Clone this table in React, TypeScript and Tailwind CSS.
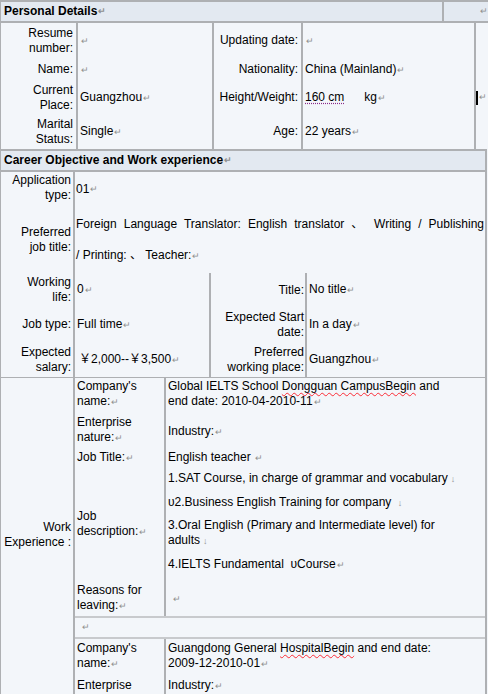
import React from "react";

const PM = () => <span className="ml-px text-[9px] text-[#8f8f8f]">↵</span>;
const LB = () => <span className="ml-[3px] text-[9px] text-[#8f8f8f]">↓</span>;

const line = "border-[#aeb0b3]";

function Header({ title, split }: { title: string; split?: boolean }) {
  return (
    <div className={`flex h-[23px] border-y-2 ${line} bg-[#e3e9f1]`}>
      <div className={`flex items-center pl-[3px] font-bold ${split ? `w-[443px] border-r-2 ${line}` : "flex-1"}`}>
        {title}
        <PM />
      </div>
      {split && (
        <div className="flex flex-1 items-center justify-end">
          <PM />
        </div>
      )}
    </div>
  );
}

function Label({ children, w, pr = "pr-[3px]" }: { children: React.ReactNode; w: string; pr?: string }) {
  return (
    <div className={`flex ${w} shrink-0 items-center justify-end border-r-2 ${line} text-right ${pr}`}>
      <div>{children}</div>
    </div>
  );
}

function Value({ children, w, last }: { children: React.ReactNode; w?: string; last?: boolean }) {
  return (
    <div className={`flex ${w ?? "flex-1"} items-center pl-[2px] ${last ? "" : `shrink-0 border-r-2 ${line}`}`}>
      <div>{children}</div>
    </div>
  );
}

function WorkRow({
  label,
  children,
  h,
  lpt,
  vpt,
}: {
  label: React.ReactNode;
  children: React.ReactNode;
  h: string;
  lpt: string;
  vpt: string;
}) {
  return (
    <div className={`flex shrink-0 ${h}`}>
      <div className={`w-[91px] shrink-0 border-r-2 ${line} pl-[2px] ${lpt}`}>{label}</div>
      <div className={`flex-1 pl-[2px] ${vpt}`}>{children}</div>
    </div>
  );
}

export default function App() {
  return (
    <div className="h-[694px] w-[488px] overflow-hidden bg-[#f3f6fa] font-['Liberation_Sans','Noto_Sans_CJK_SC',Arial,sans-serif] text-[12px] leading-[15px] text-black">
      <div className={`border-l ${line}`}>
        <Header title="Personal Details" split />

        {/* personal details */}
        <div className="flex h-[35px]">
          <Label w="w-[77px]">Resume<br />number:</Label>
          <Value w="w-[136px]"><PM /></Value>
          <Label w="w-[89px]">Updating date:</Label>
          <Value w="w-[173px]"><PM /></Value>
          <div className="flex-1" />
        </div>
        <div className="flex h-[23px]">
          <Label w="w-[77px]">Name:</Label>
          <Value w="w-[136px]"><PM /></Value>
          <Label w="w-[89px]">Nationality:</Label>
          <Value w="w-[173px]">China (Mainland)<PM /></Value>
          <div className="flex-1" />
        </div>
        <div className="flex h-[33px]">
          <Label w="w-[77px]">Current<br />Place:</Label>
          <Value w="w-[136px]">Guangzhou<PM /></Value>
          <Label w="w-[89px]">Height/Weight:</Label>
          <Value w="w-[173px]">
            <span className="whitespace-pre">
              <span className="underline decoration-[#8a2a8a] decoration-dotted underline-offset-2">160 cm</span>
              {"      kg"}
            </span>
            <PM />
          </Value>
          <div className="flex flex-1 items-center">
            <span className="h-[14px] w-[2px] bg-black" />
            <PM />
          </div>
        </div>
        <div className="flex h-[35px]">
          <Label w="w-[77px]">Marital<br />Status:</Label>
          <Value w="w-[136px]">Single<PM /></Value>
          <Label w="w-[89px]">Age:</Label>
          <Value w="w-[173px]">22 years<PM /></Value>
          <div className="flex-1" />
        </div>

        {/* career objective */}
        <div className={`w-[486px] border-r-2 ${line}`}>
          <Header title="Career Objective and Work experience" />
          <div className="flex h-[35px]">
            <div className={`w-[74px] shrink-0 border-r-2 ${line} pr-[2px] pt-[1px] text-right`}>
              Application<br />type:
            </div>
            <div className="flex flex-1 items-center pl-[1px]">01<PM /></div>
          </div>
          <div className="flex h-[66px]">
            <Label w="w-[74px]" pr="pr-[2px]">Preferred<br />job title:</Label>
            <div className="flex flex-1 flex-col justify-center gap-[16px] pl-[1px] pr-[1px]">
              <div className="text-justify [text-align-last:justify]">
                Foreign Language Translator: English translator 、 Writing / Publishing
              </div>
              <div>
                / Printing: 、 Teacher:<PM />
              </div>
            </div>
          </div>
          <div className="flex h-[34px]">
            <Label w="w-[74px]" pr="pr-[2px]">Working<br />life:</Label>
            <Value w="w-[136px]">0<PM /></Value>
            <Label w="w-[96px]" pr="pr-[1px]">Title:</Label>
            <Value last>No title<PM /></Value>
          </div>
          <div className="flex h-[35px]">
            <Label w="w-[74px]" pr="pr-[2px]">Job type:</Label>
            <Value w="w-[136px]">Full time<PM /></Value>
            <Label w="w-[96px]" pr="pr-[1px]">Expected Start<br />date:</Label>
            <Value last>In a day<PM /></Value>
          </div>
          <div className="flex h-[35px]">
            <Label w="w-[74px]" pr="pr-[2px]">Expected<br />salary:</Label>
            <Value w="w-[136px]">
              <span className="pl-[2px]">￥2,000--￥3,500</span>
              <PM />
            </Value>
            <Label w="w-[96px]" pr="pr-[1px]">Preferred<br />working place:</Label>
            <Value last>Guangzhou<PM /></Value>
          </div>

          {/* work experience */}
          <div className={`flex h-[330px] border-t ${line}`}>
            <div className={`w-[74px] shrink-0 border-r-2 ${line} pr-[2px] pt-[142px] text-right`}>
              Work<br />Experience :
            </div>
            <div className="flex flex-1 flex-col">
              <WorkRow h="h-[34px]" lpt="pt-[1px]" vpt="pt-[1px]" label={<>Company's<br />name:<PM /></>}>
                Global IELTS School{" "}
                <span className="underline decoration-red-500 decoration-wavy decoration-1 underline-offset-2">Dongguan CampusBegin</span>{" "}
                and
                <br />
                end date: 2010-04-2010-11<PM />
              </WorkRow>
              <WorkRow h="h-[35px]" lpt="pt-[3px]" vpt="pt-[12px]" label={<>Enterprise<br />nature:<PM /></>}>
                Industry:<PM />
              </WorkRow>
              <WorkRow h="h-[21px]" lpt="pt-[3px]" vpt="pt-[3px]" label={<>Job Title:<PM /></>}>
                English teacher <PM />
              </WorkRow>
              <WorkRow h="h-[114px]" lpt="pt-[41px]" vpt="pt-[3px]" label={<>Job<br />description:<PM /></>}>
                <div>1.SAT Course, in charge of grammar and vocabulary<LB /></div>
                <div className="mt-[8px]">υ2.Business English Training for company <LB /></div>
                <div className="mt-[7px]">3.Oral English (Primary and Intermediate level) for<br />adults<LB /></div>
                <div className="mt-[8px] whitespace-pre">4.IELTS Fundamental  υCourse<PM /></div>
              </WorkRow>
              <WorkRow h="h-[34px]" lpt="pt-[1px]" vpt="pt-[9px] pl-[6px]" label={<>Reasons for<br />leaving:<PM /></>}>
                <PM />
              </WorkRow>
              <div className="flex h-[23px] shrink-0 items-center border-y-2 border-[#c8cacd] pl-[6px]">
                <PM />
              </div>
              <WorkRow h="h-[35px]" lpt="pt-[2px]" vpt="pt-[2px]" label={<>Company's<br />name:<PM /></>}>
                Guangdong General{" "}
                <span className="underline decoration-red-500 decoration-wavy decoration-1 underline-offset-2">HospitalBegin</span>{" "}
                and end date:
                <br />
                2009-12-2010-01<PM />
              </WorkRow>
              <WorkRow h="h-[35px]" lpt="pt-[4px]" vpt="pt-[4px]" label={<>Enterprise<br />nature:<PM /></>}>
                Industry:<PM />
              </WorkRow>
            </div>
          </div>
        </div>
      </div>
    </div>
  );
}
